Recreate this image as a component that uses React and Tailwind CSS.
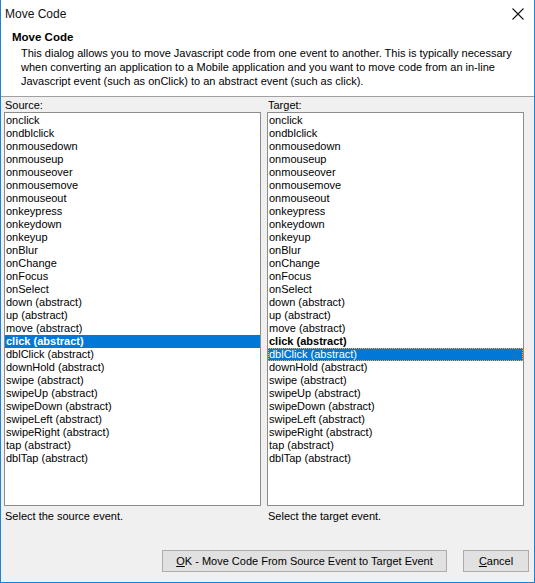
import React from "react";

const items = [
  "onclick","ondblclick","onmousedown","onmouseup","onmouseover","onmousemove","onmouseout",
  "onkeypress","onkeydown","onkeyup","onBlur","onChange","onFocus","onSelect",
  "down (abstract)","up (abstract)","move (abstract)","click (abstract)","dblClick (abstract)",
  "downHold (abstract)","swipe (abstract)","swipeUp (abstract)","swipeDown (abstract)",
  "swipeLeft (abstract)","swipeRight (abstract)","tap (abstract)","dblTap (abstract)",
];

function ListBox({ kind }) {
  return (
    <div className="w-[257px] h-[394px] bg-white border border-[#8c8c8c] pt-[1px] overflow-hidden">
      {items.map((it) => {
        if (kind === "source" && it === "click (abstract)") {
          return (
            <div key={it} className="h-[13px] leading-[13px] bg-[#0078d7] text-white font-bold pl-[1px] whitespace-nowrap">
              {it}
            </div>
          );
        }
        if (kind === "target" && it === "click (abstract)") {
          return (
            <div key={it} className="h-[13px] leading-[13px] text-black font-bold pl-[1px] whitespace-nowrap">
              {it}
            </div>
          );
        }
        if (kind === "target" && it === "dblClick (abstract)") {
          return (
            <div key={it} className="h-[13px] leading-[11px] bg-[#0078d7] text-white border border-dotted border-[#f5b041] whitespace-nowrap">
              {it}
            </div>
          );
        }
        return (
          <div key={it} className="h-[13px] leading-[13px] text-black pl-[1px] whitespace-nowrap">
            {it}
          </div>
        );
      })}
    </div>
  );
}

export default function App() {
  return (
    <div
      className="w-[535px] h-[583px] bg-[#f0f0f0] border-x border-b border-[#1883d7] flex flex-col text-[11px] text-black"
      style={{ fontFamily: '"Liberation Sans", Arial, sans-serif' }}
    >
      <div className="h-[28px] bg-white flex items-center justify-between pl-[4px] pr-[8px]">
        <span className="text-[12px] text-[#111]">Move Code</span>
        <svg width="12" height="12" viewBox="0 0 12 12" className="mr-[2px]">
          <path d="M0.5 0.5 L11.5 11.5 M11.5 0.5 L0.5 11.5" stroke="#111" strokeWidth="1.1" />
        </svg>
      </div>
      <div className="h-[69px] bg-white border-b border-[#a0a0a0] pl-[11px] pt-[2px]">
        <div className="font-bold text-[11.5px] leading-[14px]">Move Code</div>
        <div className="pl-[9px] mt-[2px] leading-[14px] text-[11px] w-[500px]">
          This dialog allows you to move Javascript code from one event to another. This is typically necessary when converting an application to a Mobile application and you want to move code from an in-line Javascript event (such as onClick) to an abstract event (such as click).
        </div>
      </div>
      <div className="flex pl-[3px] gap-[6px] pt-[2px]">
        <div className="flex flex-col">
          <div className="h-[13px] leading-[13px] pl-[1px]">Source:</div>
          <ListBox kind="source" />
          <div className="h-[13px] leading-[13px] pl-[1px] mt-[4px]">Select the source event.</div>
        </div>
        <div className="flex flex-col">
          <div className="h-[13px] leading-[13px] pl-[1px]">Target:</div>
          <ListBox kind="target" />
          <div className="h-[13px] leading-[13px] pl-[1px] mt-[4px]">Select the target event.</div>
        </div>
      </div>
      <div className="flex justify-end gap-[16px] pr-[5px] mt-[27px]">
        <button className="w-[285px] h-[22px] bg-[#e1e1e1] border border-[#adadad] text-[11px] leading-[20px]">
          <span className="underline">O</span>K - Move Code From Source Event to Target Event
        </button>
        <button className="w-[66px] h-[22px] bg-[#e1e1e1] border border-[#adadad] text-[11px] leading-[20px]">
          <span className="underline">C</span>ancel
        </button>
      </div>
    </div>
  );
}
